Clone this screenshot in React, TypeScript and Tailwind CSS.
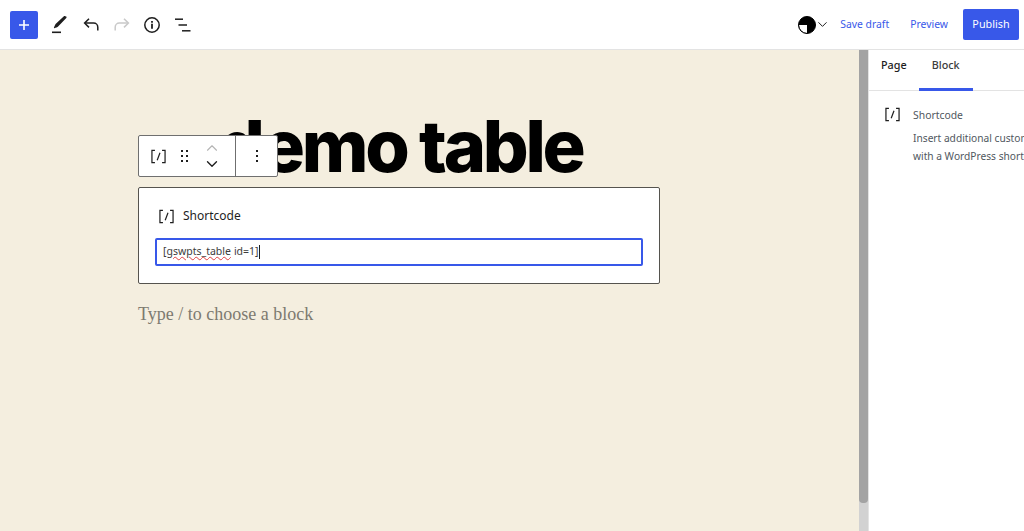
import { ChevronDown, ChevronUp } from 'lucide-react';

const ShortcodeIcon = ({ className }: { className?: string }) => (
  <svg viewBox="0 0 16 16" className={className} fill="none" stroke="currentColor" strokeWidth="1.3">
    <path d="M4.2 1.4H1v13.2h3.2" />
    <path d="M11.8 1.4H15v13.2h-3.2" />
    <path d="M9.6 4 6.6 12" />
  </svg>
);

const ToolIcons = () => (
  <div className="flex items-center">
    <svg viewBox="0 0 24 24" className="ml-[9px] h-6 w-6 text-[#1e1e1e]" fill="currentColor">
      <path d="M18.6 3.4c-.5-.5-1.2-.5-1.7-.1L8.6 11c-.5.5-1.3 2.6-1.7 3.8-.1.3.2.6.5.5 1.2-.4 3.2-1.2 3.7-1.7l8.2-8.5c.4-.5.4-1.2 0-1.6z" />
      <rect x="5" y="18.5" width="9" height="1.6" />
    </svg>
    <svg viewBox="0 0 24 24" className="ml-[8px] h-6 w-6 text-[#1e1e1e]" fill="none" stroke="currentColor" strokeWidth="1.5">
      <path d="M18.8 17.5v-3.2c0-2.3-1.9-4.2-4.2-4.2H6" />
      <path d="M10 5.8 5.6 10.1l4.4 4.3" />
    </svg>
    <svg viewBox="0 0 24 24" className="ml-[7px] h-6 w-6 text-[#c9c9c9]" fill="none" stroke="currentColor" strokeWidth="1.5">
      <path d="M5.2 17.5v-3.2c0-2.3 1.9-4.2 4.2-4.2H18" />
      <path d="M14 5.8l4.4 4.3-4.4 4.3" />
    </svg>
    <svg viewBox="0 0 24 24" className="ml-[6px] h-6 w-6 text-[#1e1e1e]" fill="none" stroke="currentColor" strokeWidth="1.5">
      <circle cx="12" cy="12" r="7.2" />
      <path d="M12 10.8v5" strokeWidth="1.8" />
      <path d="M12 8v1.7" strokeWidth="1.8" />
    </svg>
    <svg viewBox="0 0 24 24" className="ml-[7px] h-6 w-6 text-[#1e1e1e]" fill="none" stroke="currentColor" strokeWidth="1.5">
      <path d="M4 6.2h8" />
      <path d="M7.5 12H16" />
      <path d="M11 17.8h8.5" />
    </svg>
  </div>
);

const BlockToolbar = () => (
  <div className="absolute left-[138px] top-[85px] flex h-[42px] w-[140px] rounded-[2px] border border-[#6f6f6f] bg-white text-[#1e1e1e]">
    <div className="flex w-[97px] items-center border-r border-[#6f6f6f]">
      <ShortcodeIcon className="ml-[12px] h-[15px] w-[15px]" />
      <svg viewBox="0 0 12 14" className="ml-[13px] h-[14px] w-3" fill="currentColor">
        <rect x="2" y="1" width="2" height="2" />
        <rect x="7" y="1" width="2" height="2" />
        <rect x="2" y="6" width="2" height="2" />
        <rect x="7" y="6" width="2" height="2" />
        <rect x="2" y="11" width="2" height="2" />
        <rect x="7" y="11" width="2" height="2" />
      </svg>
      <div className="ml-[12px] flex flex-col items-center">
        <ChevronUp className="-mb-[3px] h-[18px] w-[18px] text-[#b4b4b4]" strokeWidth={1.5} />
        <ChevronDown className="mt-[1px] h-[18px] w-[18px]" strokeWidth={1.8} />
      </div>
    </div>
    <div className="flex flex-1 items-center justify-center">
      <svg viewBox="0 0 4 14" className="h-[14px] w-1" fill="currentColor">
        <rect x="1" y="1" width="2" height="2" />
        <rect x="1" y="6" width="2" height="2" />
        <rect x="1" y="11" width="2" height="2" />
      </svg>
    </div>
  </div>
);

export default function App() {
  return (
    <div className="flex h-[531px] w-[1024px] flex-col overflow-hidden bg-white font-['Noto_Sans',sans-serif]">
      <header className="flex h-[50px] shrink-0 items-center border-b border-[#e3e3e3] bg-white">
        <button className="ml-[10px] flex h-[28px] w-[28px] items-center justify-center rounded-[2px] bg-[#3858e9] text-white">
          <svg viewBox="0 0 14 14" className="h-[14px] w-[14px]" fill="none" stroke="currentColor" strokeWidth="1.6">
            <path d="M7 2v10M2 7h10" />
          </svg>
        </button>
        <ToolIcons />
        <div className="ml-auto flex items-center">
          <svg viewBox="0 0 18 18" className="h-[18px] w-[18px]">
            <circle cx="9" cy="9" r="8.5" fill="#000" />
            <path d="M1 9h8v8A8 8 0 0 1 1 9z" fill="#fff" />
            <circle cx="9" cy="9" r="8.5" fill="none" stroke="#000" strokeWidth="1" />
          </svg>
          <ChevronDown className="-ml-[1px] h-[15px] w-[15px] text-[#1e1e1e]" strokeWidth={1.6} />
          <span className="ml-[10px] text-[10.4px] text-[#3858e9]">Save draft</span>
          <span className="ml-[21px] text-[10.4px] text-[#3858e9]">Preview</span>
          <button className="ml-[15px] mr-[5px] h-[31px] w-[56px] rounded-[2px] bg-[#3858e9] text-[10.8px] text-white">Publish</button>
        </div>
      </header>

      <div className="flex min-h-0 flex-1">
        <main className="relative w-[859px] shrink-0 overflow-hidden bg-[#f4eedf]">
          <div className="ml-[138px] w-[522px]">
            <h1 className="mt-[46px] h-[91px] pl-[81px] font-['Inter',sans-serif] text-[72px] leading-[100px] font-extrabold tracking-[-0.045em] whitespace-nowrap text-black">
              demo table
            </h1>
            <div className="h-[97px] rounded-[2px] border border-[#55534e] bg-white">
              <div className="ml-[20px] mt-[17px] flex h-[22px] items-center text-[#1e1e1e]">
                <ShortcodeIcon className="h-[15px] w-[15px]" />
                <span className="ml-[9px] text-[12px]">Shortcode</span>
              </div>
              <div className="mx-[16px] mt-[11px] flex h-[28px] items-center rounded-[2px] border-2 border-[#3858e9] bg-white pl-[6px] text-[10.5px] text-[#3c3c3c]">
                <span className="underline decoration-wavy decoration-[#e04040] decoration-1">[gswpts_table</span>
                <span className="ml-[3px]">id=1]</span>
                <span className="h-[14px] w-px bg-[#1e1e1e]" />
              </div>
            </div>
            <p className="mt-[18px] font-['Liberation_Serif',serif] text-[18px] leading-[24px] text-[#7d7a70]">
              Type / to choose a block
            </p>
          </div>
          <BlockToolbar />
        </main>

        <div className="flex w-[9px] shrink-0 flex-col bg-[#d2d2d2]">
          <div className="h-[453px] rounded-b-[4px] bg-[#a3a3a3]" />
        </div>

        <aside className="min-w-0 flex-1 overflow-hidden border-l border-[#e3e3e3] bg-white">
          <div className="flex h-[41px] items-stretch border-b border-[#e3e3e3] text-[10.8px] font-medium">
            <span className="ml-[12px] pt-[7px] text-[#1e1e1e]">Page</span>
            <div className="ml-[12px] h-[41px] w-[54px] border-b-[3px] border-[#3858e9] pt-[7px] text-center text-[#3c3c3c]">Block</div>
          </div>
          <div className="flex pl-[16px] pt-[16px]">
            <ShortcodeIcon className="h-[15px] w-[15px] shrink-0 text-[#1e1e1e]" />
            <div className="ml-[13px] min-w-0 whitespace-nowrap text-[#50575e]">
              <div className="text-[10.4px] leading-[16px]">Shortcode</div>
              <div className="mt-[6px] text-[10.2px] leading-[18px]">
                Insert additional custom elements
                <br />
                with a WordPress shortcode.
              </div>
            </div>
          </div>
        </aside>
      </div>
    </div>
  );
}
